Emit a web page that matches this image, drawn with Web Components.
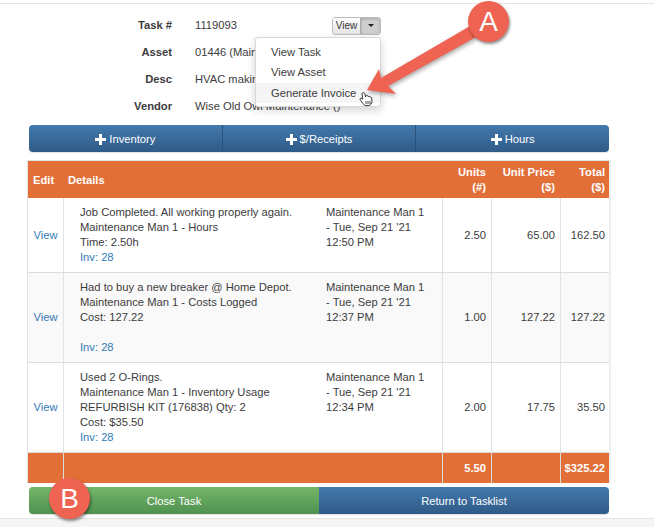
<!DOCTYPE html>
<html>
<head>
<meta charset="utf-8">
<style>
  html, body { margin: 0; background: #fff; }
  body { font: 11.2px/15px "Liberation Sans", Arial, sans-serif; color: #3c3c3c; }
</style>
</head>
<body>
<task-page>
  <task-field label="Task #">1119093
    <split-button slot="action"></split-button>
  </task-field>
  <task-field label="Asset">01446 (Main</task-field>
  <task-field label="Desc">HVAC making</task-field>
  <task-field label="Vendor">Wise Old Owl Maintenance ()</task-field>

  <action-bar slot="bar" top>
    <action-button icon>Inventory</action-button>
    <action-button icon>$/Receipts</action-button>
    <action-button icon>Hours</action-button>
  </action-bar>

  <line-table slot="table">
    <line-row slot="rows" units="2.50" price="65.00" total="162.50" who="Maintenance Man 1 - Tue, Sep 21 '21 12:50 PM">
      Job Completed. All working properly again.<br>
      Maintenance Man 1 - Hours<br>
      Time: 2.50h<br>
      <a>Inv: 28</a>
    </line-row>
    <line-row slot="rows" shaded units="1.00" price="127.22" total="127.22" who="Maintenance Man 1 - Tue, Sep 21 '21 12:37 PM">
      Had to buy a new breaker @ Home Depot.<br>
      Maintenance Man 1 - Costs Logged<br>
      Cost: 127.22<br>
      <br>
      <a>Inv: 28</a>
    </line-row>
    <line-row slot="rows" units="2.00" price="17.75" total="35.50" who="Maintenance Man 1 - Tue, Sep 21 '21 12:34 PM">
      Used 2 O-Rings.<br>
      Maintenance Man 1 - Inventory Usage<br>
      REFURBISH KIT (176838) Qty: 2<br>
      Cost: $35.50<br>
      <a>Inv: 28</a>
    </line-row>
  </line-table>

  <action-bar slot="footer">
    <action-button green>Close Task</action-button>
    <action-button>Return to Tasklist</action-button>
  </action-bar>

  <note-badge slot="notes" style="left:468px;top:1px">A</note-badge>
  <note-badge slot="notes" style="left:49px;top:478px">B</note-badge>
</task-page>

<script>
  class TaskPage extends HTMLElement {
    constructor() {
      super();
      this.attachShadow({ mode: "open" }).innerHTML = `
        <style>
          :host { display: block; position: relative; width: 654px; height: 527px; overflow: hidden; box-sizing: border-box; }
          .top { height: 3px; border-bottom: 1px solid #e4e4e4; }
          .fields { padding-top: 8px; height: 113px; box-sizing: border-box; margin-bottom: 8px; }
          .table { margin: 8px 43px 0 27px; }
          .foot { margin: 4px 45px 0 29px; }
          .end { margin-top: 4px; height: 8px; background: #f5f5f5; border-top: 1px solid #e4e4e4; }
          svg { position: absolute; left: 0; top: 0; pointer-events: none; z-index: 2; }
          .arrow { filter: drop-shadow(1px 2px 2px rgba(0,0,0,.35)); }
          ::slotted(note-badge) { z-index: 3; }
        </style>
        <div class="top"></div>
        <div class="fields"><slot></slot></div>
        <slot name="bar"></slot>
        <div class="table"><slot name="table"></slot></div>
        <div class="foot"><slot name="footer"></slot></div>
        <div class="end"></div>
        <svg width="654" height="527">
          <path class="arrow" fill="#ee6352" d="M367 90 L379 69 L381 78 L470 26 L476 37 L388 86 L396 94 Z"/>
          <g fill="#fff" stroke="#222" stroke-width=".9" stroke-linejoin="round">
            <path d="M362.5 93 c1-.8 2.2-.2 2.4.9 l.7 3 .2-1 c.5-.9 1.9-.7 2.1.3 l.2.5 c.6-.7 1.8-.4 2 .5 c.7-.4 1.5 0 1.6.9 l.2 3.4 c0 2-1.200 3.700-3 4 l-3 .1 c-1.500-.1-2.300-1-3-2.200 l-2.700-3.700 c-.6-1 .5-2 1.500-1.400 l1 .8 -.7-5 c-.1-.5 0-.9 .2-1.100 Z"/>
            <path d="M366 101 v3 M368 101 v3 M370 101 v3" fill="none" stroke-width=".8"/>
          </g>
        </svg>
        <slot name="notes"></slot>
      `;
    }
  }

  class TaskField extends HTMLElement {
    constructor() {
      super();
      this.attachShadow({ mode: "open" }).innerHTML = `
        <style>
          :host { display: flex; align-items: center; height: 27px; white-space: nowrap; }
          b { width: 172px; text-align: right; margin-right: 23px; }
          .value { width: 137px; }
        </style>
        <b>${this.getAttribute("label")}</b>
        <div class="value"><slot></slot></div>
        <slot name="action"></slot>
      `;
    }
  }

  class SplitButton extends HTMLElement {
    constructor() {
      super();
      this.attachShadow({ mode: "open" }).innerHTML = `
        <style>
          :host { display: block; position: relative; width: 49px; height: 18px; font-size: 10px; line-height: 16px; color: #333; }
          .btn { display: flex; height: 18px; box-sizing: border-box; border: 1px solid #bbb; border-radius: 3px; overflow: hidden; }
          .label { width: 27px; text-align: center; background: linear-gradient(#fff, #e4e4e4); border-right: 1px solid #aaa; }
          .caret { flex: 1; display: flex; align-items: center; justify-content: center; background: #cfcfcf; box-shadow: inset 0 1px 3px rgba(0,0,0,.2); }
          .caret i { border: 3px solid transparent; border-top: 3px solid #222; border-bottom: 0; }
          .menu { position: absolute; right: 0; top: 20px; width: 126px; height: 70px; box-sizing: border-box; padding-top: 4px; background: #fff; border: 1px solid #d8d8d8; border-radius: 3px; box-shadow: 0 3px 8px rgba(0,0,0,.18); font-size: 11.2px; line-height: 20.500px; color: #3c3c3c; z-index: 1; }
          .menu div { padding-left: 15px; }
          .menu .on { background: #f5f5f5; }
        </style>
        <div class="btn"><div class="label">View</div><div class="caret"><i></i></div></div>
        <div class="menu">
          <div>View Task</div>
          <div>View Asset</div>
          <div class="on">Generate Invoice</div>
        </div>
      `;
    }
  }

  class ActionBar extends HTMLElement {
    constructor() {
      super();
      this.attachShadow({ mode: "open" }).innerHTML = `
        <style>
          :host { display: flex; height: 27px; border-radius: 4px; overflow: hidden; box-shadow: 0 1px 1px rgba(0,0,0,.12); }
          :host([top]) { margin: 0 45px 0 29px; }
          ::slotted(*) { flex: 1; }
        </style>
        <slot></slot>
      `;
    }
  }

  class ActionButton extends HTMLElement {
    constructor() {
      super();
      const icon = this.hasAttribute("icon")
        ? `<svg width="11" height="11" viewBox="0 0 11 11"><path fill="#fff" d="M4 0h3v4h4v3H7v4H4V7H0V4h4z"/></svg>`
        : "";
      this.attachShadow({ mode: "open" }).innerHTML = `
        <style>
          :host { display: flex; align-items: center; justify-content: center; gap: 3px; padding-top: 1px; color: #fff; background: linear-gradient(#4379ad, #2f5b88); border-right: 1px solid #2a5179; box-sizing: border-box; }
          :host(:last-child) { border-right: 0; }
          :host([green]) { background: linear-gradient(#74b568, #4f9150); border-right: 0; }
        </style>
        ${icon}<slot></slot>
      `;
    }
  }

  class LineTable extends HTMLElement {
    constructor() {
      super();
      this.attachShadow({ mode: "open" }).innerHTML = `
        <style>
          :host { display: block; width: 584px; box-sizing: border-box; border: 1px solid #e2e2e2; border-bottom: 0; border-right: 2px solid #eee; }
          .bar { display: grid; grid-template-columns: 35px 379px 49px 69px 50px; background: #e26f37; color: #fff; font-weight: bold; }
          .head { height: 37px; align-items: center; padding-top: 1px; box-sizing: border-box; }
          .head div { padding: 0 5px; text-align: right; }
          .head div:nth-child(1), .head div:nth-child(2) { text-align: left; }
          .foot { height: 31px; border-top: 1px solid #ddd; line-height: 31px; box-sizing: border-box; }
          .foot div { border-left: 1px solid #ddd; padding-right: 5px; text-align: right; }
          .foot div:first-child { border-left: 0; }
        </style>
        <div class="bar head">
          <div>Edit</div><div>Details</div><div>Units (#)</div><div>Unit Price ($)</div><div>Total ($)</div>
        </div>
        <slot name="rows"></slot>
        <div class="bar foot">
          <div></div><div></div><div>5.50</div><div></div><div>$325.22</div>
        </div>
      `;
    }
  }

  class LineRow extends HTMLElement {
    constructor() {
      super();
      const a = n => this.getAttribute(n);
      this.attachShadow({ mode: "open" }).innerHTML = `
        <style>
          :host { display: grid; grid-template-columns: 35px 379px 49px 69px 50px; background: #fff; }
          :host([shaded]) { background: #f9f9f9; }
          :host(:not(:first-child)) { border-top: 1px solid #ddd; }
          .cell { display: flex; align-items: center; justify-content: flex-end; padding-right: 5px; border-left: 1px solid #e2e2e2; }
          .edit { justify-content: center; padding: 0; border-left: 0; color: #337ab7; }
          .main { display: flex; align-items: flex-start; justify-content: flex-start; padding: 7px 0 7px 16px; }
          .text { width: 246px; }
          .who { width: 105px; }
          ::slotted(a) { color: #337ab7; }
        </style>
        <div class="cell edit">View</div>
        <div class="cell main">
          <div class="text"><slot></slot></div>
          <div class="who">${a("who")}</div>
        </div>
        <div class="cell">${a("units")}</div>
        <div class="cell">${a("price")}</div>
        <div class="cell">${a("total")}</div>
      `;
    }
  }

  class NoteBadge extends HTMLElement {
    constructor() {
      super();
      this.attachShadow({ mode: "open" }).innerHTML = `
        <style>
          :host { position: absolute; width: 41px; height: 41px; border-radius: 50%; background: #ee6352; color: #fff; display: flex; align-items: center; justify-content: center; font: 28px/1 "Liberation Sans", Arial, sans-serif; box-shadow: 1px 2px 3px rgba(0,0,0,.45); }
        </style>
        <slot></slot>
      `;
    }
  }

  customElements.define("task-page", TaskPage);
  customElements.define("task-field", TaskField);
  customElements.define("split-button", SplitButton);
  customElements.define("action-bar", ActionBar);
  customElements.define("action-button", ActionButton);
  customElements.define("line-table", LineTable);
  customElements.define("line-row", LineRow);
  customElements.define("note-badge", NoteBadge);
</script>
</body>
</html>
